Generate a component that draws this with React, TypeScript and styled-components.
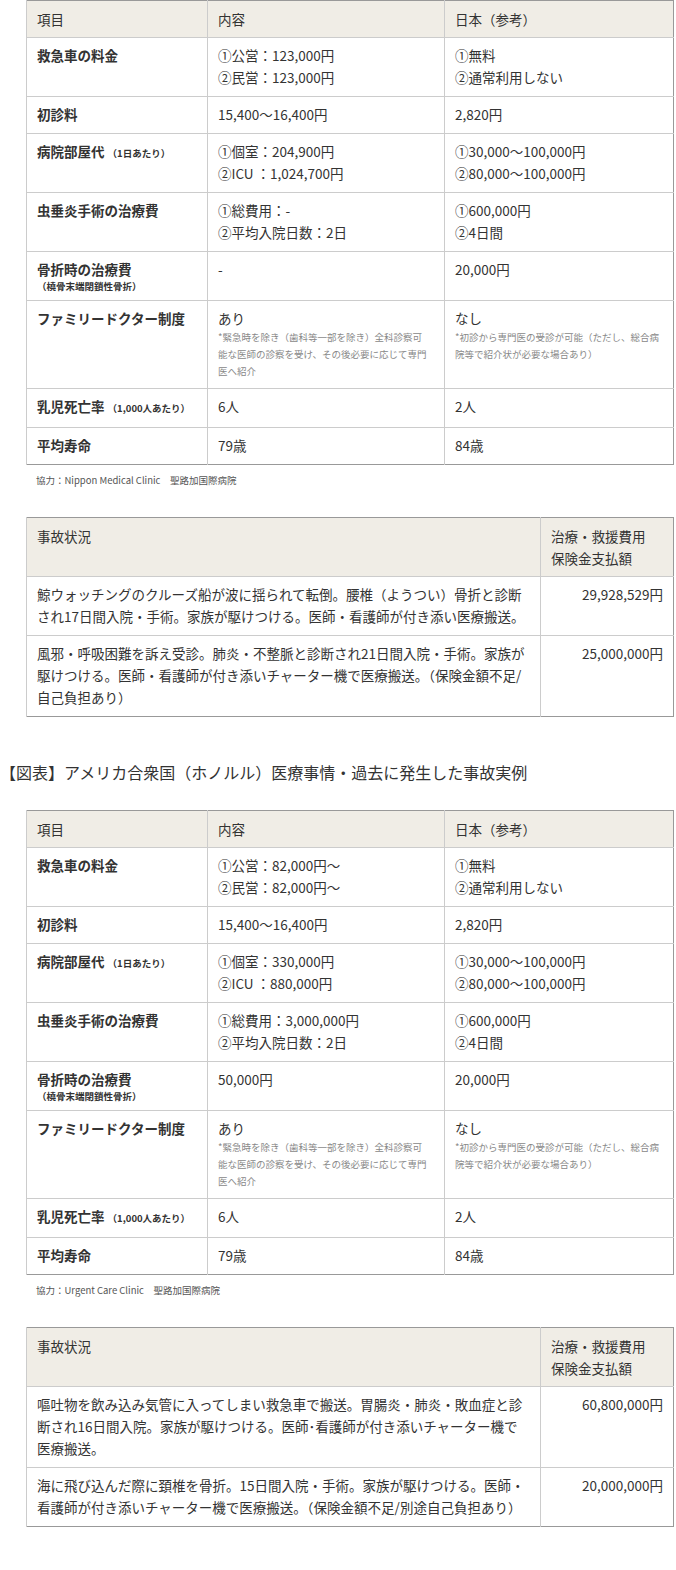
import React from 'react';
import styled, { createGlobalStyle } from 'styled-components';

const Global = createGlobalStyle`
  body {
    margin: 0;
    background: #fff;
    color: #333;
    font-family: "Noto Sans CJK JP", "Noto Sans", sans-serif;
    font-size: 13.5px;
  }
`;

const Page = styled.div`
  width: 676px;
`;

const Block = styled.div`
  padding-left: 26px;
`;

const Table = styled.table`
  width: 648px;
  border-collapse: collapse;
  border: 1px solid #999;
  table-layout: fixed;
`;

const Th = styled.th<{ $w?: number }>`
  background: #f0ede6;
  font-weight: normal;
  text-align: left;
  vertical-align: top;
  padding: 7px 10px 7px;
  line-height: 22px;
  border-left: 1px solid #ccc;
  ${(p) => (p.$w ? `width: ${p.$w}px;` : '')}
`;

const Td = styled.td<{ $label?: boolean; $right?: boolean }>`
  vertical-align: top;
  padding: 6px 10px 8px;
  line-height: 22px;
  border-top: 1px solid #ccc;
  border-left: 1px solid #ccc;
  font-weight: ${(p) => (p.$label ? 'bold' : 'normal')};
  text-align: ${(p) => (p.$right ? 'right' : 'left')};
`;

const Small = styled.span`
  font-size: 9.5px;
  font-weight: bold;
`;

const SmallBlock = styled.div`
  font-size: 9.5px;
  font-weight: bold;
  line-height: 12px;
`;

const Note = styled.div`
  font-size: 9.5px;
  color: #888;
  line-height: 17px;
  max-width: 212px;
`;

const Caption = styled.p`
  margin: 8px 0 0 10px;
  font-size: 9.5px;
  color: #555;
  height: 44px;
`;

const Title = styled.h2`
  margin: 43px 0 26px;
  font-size: 16px;
  font-weight: normal;
  line-height: 24px;
`;

type Row = { label: React.ReactNode; a: React.ReactNode; b: React.ReactNode };

const L = ({ lines }: { lines: string[] }) => (
  <>
    {lines.map((l, i) => (
      <div key={i}>{l}</div>
    ))}
  </>
);

const CompareTable = ({ rows }: { rows: Row[] }) => (
  <Table>
    <thead>
      <tr>
        <Th $w={160}>項目</Th>
        <Th $w={216}>内容</Th>
        <Th>日本（参考）</Th>
      </tr>
    </thead>
    <tbody>
      {rows.map((r, i) => (
        <tr key={i}>
          <Td $label>{r.label}</Td>
          <Td>{r.a}</Td>
          <Td>{r.b}</Td>
        </tr>
      ))}
    </tbody>
  </Table>
);

const CaseTable = ({ rows }: { rows: [string, string][] }) => (
  <Table>
    <thead>
      <tr>
        <Th>事故状況</Th>
        <Th $w={112}>
          治療・救援費用
          <br />
          保険金支払額
        </Th>
      </tr>
    </thead>
    <tbody>
      {rows.map(([t, v], i) => (
        <tr key={i}>
          <Td>{t}</Td>
          <Td $right>{v}</Td>
        </tr>
      ))}
    </tbody>
  </Table>
);

const family = {
  a: (
    <>
      あり
      <Note>*緊急時を除き（歯科等一部を除き）全科診察可能な医師の診察を受け、その後必要に応じて専門医へ紹介</Note>
    </>
  ),
  b: (
    <>
      なし
      <Note>*初診から専門医の受診が可能（ただし、総合病院等で紹介状が必要な場合あり）</Note>
    </>
  ),
};

const common = (x: {
  amb: string[];
  room: string[];
  appen: string[];
  frac: string;
}): Row[] => [
  { label: '救急車の料金', a: <L lines={x.amb} />, b: <L lines={['①無料', '②通常利用しない']} /> },
  { label: '初診料', a: '15,400～16,400円', b: '2,820円' },
  {
    label: (
      <>
        病院部屋代 <Small>（1日あたり）</Small>
      </>
    ),
    a: <L lines={x.room} />,
    b: <L lines={['①30,000～100,000円', '②80,000～100,000円']} />,
  },
  { label: '虫垂炎手術の治療費', a: <L lines={x.appen} />, b: <L lines={['①600,000円', '②4日間']} /> },
  {
    label: (
      <>
        骨折時の治療費
        <SmallBlock>（橈骨末端閉鎖性骨折）</SmallBlock>
      </>
    ),
    a: x.frac,
    b: '20,000円',
  },
  { label: 'ファミリードクター制度', ...family },
  {
    label: (
      <>
        乳児死亡率 <Small>（1,000人あたり）</Small>
      </>
    ),
    a: '6人',
    b: '2人',
  },
  { label: '平均寿命', a: '79歳', b: '84歳' },
];

export default function App() {
  return (
    <Page>
      <Global />
      <Block>
        <CompareTable
          rows={common({
            amb: ['①公営：123,000円', '②民営：123,000円'],
            room: ['①個室：204,900円', '②ICU ：1,024,700円'],
            appen: ['①総費用：-', '②平均入院日数：2日'],
            frac: '-',
          })}
        />
        <Caption>協力：Nippon Medical Clinic　聖路加国際病院</Caption>
        <CaseTable
          rows={[
            ['鯨ウォッチングのクルーズ船が波に揺られて転倒。腰椎（ようつい）骨折と診断され17日間入院・手術。家族が駆けつける。医師・看護師が付き添い医療搬送。', '29,928,529円'],
            ['風邪・呼吸困難を訴え受診。肺炎・不整脈と診断され21日間入院・手術。家族が駆けつける。医師・看護師が付き添いチャーター機で医療搬送。（保険金額不足/自己負担あり）', '25,000,000円'],
          ]}
        />
      </Block>
      <Title>【図表】アメリカ合衆国（ホノルル）医療事情・過去に発生した事故実例</Title>
      <Block>
        <CompareTable
          rows={common({
            amb: ['①公営：82,000円～', '②民営：82,000円～'],
            room: ['①個室：330,000円', '②ICU ：880,000円'],
            appen: ['①総費用：3,000,000円', '②平均入院日数：2日'],
            frac: '50,000円',
          })}
        />
        <Caption>協力：Urgent Care Clinic　聖路加国際病院</Caption>
        <CaseTable
          rows={[
            ['嘔吐物を飲み込み気管に入ってしまい救急車で搬送。胃腸炎・肺炎・敗血症と診断され16日間入院。家族が駆けつける。医師･看護師が付き添いチャーター機で医療搬送。', '60,800,000円'],
            ['海に飛び込んだ際に頚椎を骨折。15日間入院・手術。家族が駆けつける。医師・看護師が付き添いチャーター機で医療搬送。（保険金額不足/別途自己負担あり）', '20,000,000円'],
          ]}
        />
      </Block>
    </Page>
  );
}
